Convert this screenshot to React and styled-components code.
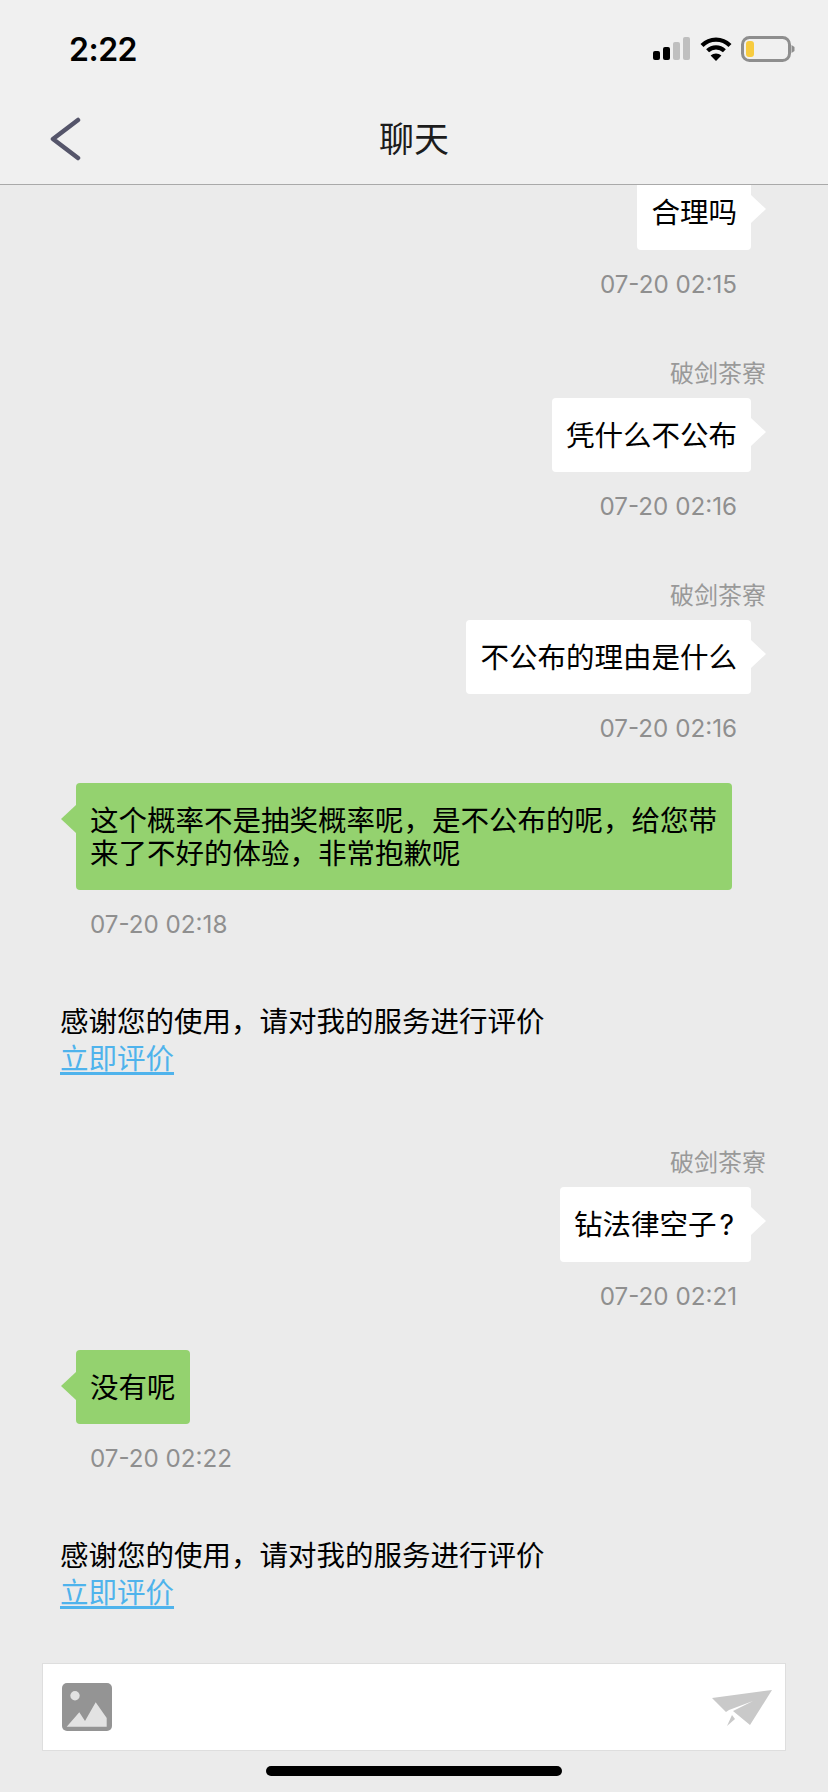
import React from "react";
import styled, { createGlobalStyle } from "styled-components";

const GlobalStyle = createGlobalStyle`
  html, body {
    margin: 0;
    padding: 0;
    background: #ebebeb;
  }
  * {
    box-sizing: border-box;
  }
`;

const FONT = `Inter, "Noto Sans CJK SC", sans-serif`;

const Page = styled.div`
  width: 828px;
  height: 1792px;
  display: flex;
  flex-direction: column;
  overflow: hidden;
  background: #ebebeb;
  font-family: ${FONT};
  color: #000;
`;

const Header = styled.header`
  height: 185px;
  flex: none;
  display: flex;
  flex-direction: column;
  background: #f0f0f0;
  border-bottom: 1px solid #a9a9a9;
`;

const StatusBar = styled.div`
  height: 98px;
  display: flex;
  align-items: center;
  justify-content: space-between;
  padding: 0 33px 0 69px;
`;

const Clock = styled.span`
  font-family: Inter, sans-serif;
  font-size: 32px;
  font-weight: 600;
  letter-spacing: -0.5px;
`;

const NavBar = styled.div`
  flex: 1;
  position: relative;
  display: flex;
  align-items: center;
  justify-content: center;
  padding-bottom: 4px;
`;

const BackIcon = styled.svg`
  position: absolute;
  left: 48px;
  top: 19px;
`;

const Title = styled.h1`
  margin: 0;
  font-size: 35px;
  line-height: 44px;
  font-weight: 400;
  color: #1c1c1c;
`;

const ChatList = styled.main`
  flex: 1;
  overflow: hidden;
`;

const Group = styled.section`
  display: flex;
  flex-direction: column;
  align-items: ${(p) => (p.$mine ? "flex-end" : "flex-start")};
  padding: ${(p) => (p.$mine ? "0 77px 0 0" : "0 0 0 76px")};
  margin-bottom: ${(p) => p.$gap}px;
  margin-top: ${(p) => p.$clip || 0}px;
`;

const Sender = styled.div`
  font-size: 24px;
  line-height: 24px;
  color: #999;
  margin: 0 -15px 12px 0;
`;

const Bubble = styled.div`
  position: relative;
  padding: 22px 14px 20px;
  font-size: 28.5px;
  line-height: 32.5px;
  border-radius: 4px;
  background: ${(p) => (p.$mine ? "#fff" : "#94d26f")};
  max-width: 656px;
  &::after {
    content: "";
    position: absolute;
    top: ${(p) => (p.$mine ? 20 : 22)}px;
    ${(p) => (p.$mine ? "right: -15px;" : "left: -15px;")}
    border-style: solid;
    border-width: 14px 15px 14px 0;
    border-color: transparent ${(p) => (p.$mine ? "#fff" : "#94d26f")} transparent transparent;
    ${(p) => p.$mine && "transform: scaleX(-1);"}
  }
`;

const QuestionMark = styled.span`
  padding: 0 3px;
`;

const Time = styled.div`
  font-size: 24.2px;
  line-height: 30px;
  margin-top: 20px;
  color: #8f8f8f;
  ${(p) => (p.$mine ? "padding-right: 14px;" : "padding-left: 14px;")}
`;

const Notice = styled.div`
  padding: 1px 0 0 60px;
  font-size: 28.5px;
  line-height: 37px;
  margin-bottom: ${(p) => p.$gap}px;
`;

const RateLink = styled.a`
  display: block;
  width: fit-content;
  color: #4fb3ec;
  text-decoration: underline;
  text-decoration-thickness: 3px;
  text-underline-offset: 3px;
`;

const Footer = styled.footer`
  flex: none;
  height: 129px;
  padding: 0 42px;
  display: flex;
  flex-direction: column;
  align-items: center;
`;

const InputBar = styled.div`
  width: 100%;
  height: 88px;
  background: #fff;
  border: 1px solid #dedede;
  display: flex;
  align-items: center;
  justify-content: space-between;
  padding: 0 13px 0 19px;
`;

const HomeBar = styled.div`
  width: 296px;
  height: 10px;
  margin-top: 15px;
  border-radius: 5px;
  background: #000;
`;

function SignalIcon() {
  return (
    <svg width="38" height="24" viewBox="0 0 38 24">
      <rect x="0" y="14" width="7" height="9" rx="2" fill="#000" />
      <rect x="10" y="10" width="7" height="13" rx="2" fill="#000" />
      <rect x="20" y="5" width="7" height="18" rx="2" fill="#bfbfbf" />
      <rect x="30" y="0" width="7" height="23" rx="2" fill="#bfbfbf" />
    </svg>
  );
}

function WifiIcon() {
  return (
    <svg width="32" height="24" viewBox="0 0 32 24" fill="none" stroke="#000" strokeWidth="4.2">
      <path d="M2 8.5C9.8 0.6 22.2 0.6 30 8.5" />
      <path d="M7.6 13.8C12.4 9.2 19.6 9.2 24.4 13.8" />
      <path d="M16 24L10.6 18.6C13.6 15.8 18.4 15.8 21.4 18.6Z" fill="#000" stroke="none" />
    </svg>
  );
}

function BatteryIcon() {
  return (
    <svg width="54" height="26" viewBox="0 0 54 26">
      <rect x="1.5" y="1.5" width="47" height="23" rx="7" fill="none" stroke="#8e8e8e" strokeWidth="3" />
      <rect x="5" y="5" width="8" height="16" rx="3" fill="#f7cb3f" />
      <path d="M50.5 9L53.5 11V15L50.5 17Z" fill="#8e8e8e" />
    </svg>
  );
}

const StatusIcons = styled.div`
  display: flex;
  align-items: center;
  gap: 9px;
`;

function ImageIcon() {
  return (
    <svg width="50" height="48" viewBox="0 0 50 48">
      <rect width="50" height="48" rx="5" fill="#949494" />
      <circle cx="13" cy="12.7" r="4.7" fill="#e2e2e2" />
      <path d="M4.7 43.7L17.3 29.3L23 38L33.7 19.3L44.7 35V43.7Z" fill="#e2e2e2" />
    </svg>
  );
}

function SendIcon() {
  return (
    <svg width="62" height="37" viewBox="0 0 62 37" fill="#c9c9c9">
      <path d="M2 9L62 1L40 36L23 22L43 12L19 21L16 23Z" />
      <path d="M22 26L25 30L17 37Z" />
    </svg>
  );
}

const RATE_TEXT = "感谢您的使用，请对我的服务进行评价";

export default function App() {
  return (
    <Page>
      <GlobalStyle />
      <Header>
        <StatusBar>
          <Clock>2:22</Clock>
          <StatusIcons>
            <SignalIcon />
            <WifiIcon />
            <BatteryIcon />
          </StatusIcons>
        </StatusBar>
        <NavBar>
          <BackIcon width="34" height="44" viewBox="0 0 34 44" fill="none" stroke="#55556a" strokeWidth="4.5" strokeLinecap="round" strokeLinejoin="round">
            <path d="M30 3L5 22L30 41" />
          </BackIcon>
          <Title>聊天</Title>
        </NavBar>
      </Header>
      <ChatList>
        <Group $mine $gap={62} $clip={-10}>
          <Bubble $mine>合理吗</Bubble>
          <Time $mine>07-20 02:15</Time>
        </Group>
        <Group $mine $gap={61.5}>
          <Sender>破剑茶寮</Sender>
          <Bubble $mine>凭什么不公布</Bubble>
          <Time $mine>07-20 02:16</Time>
        </Group>
        <Group $mine $gap={39}>
          <Sender>破剑茶寮</Sender>
          <Bubble $mine>不公布的理由是什么</Bubble>
          <Time $mine>07-20 02:16</Time>
        </Group>
        <Group $gap={62}>
          <Bubble>这个概率不是抽奖概率呢，是不公布的呢，给您带来了不好的体验，非常抱歉呢</Bubble>
          <Time>07-20 02:18</Time>
        </Group>
        <Notice $gap={74}>
          {RATE_TEXT}
          <RateLink>立即评价</RateLink>
        </Notice>
        <Group $mine $gap={38}>
          <Sender>破剑茶寮</Sender>
          <Bubble $mine>钻法律空子<QuestionMark>?</QuestionMark></Bubble>
          <Time $mine>07-20 02:21</Time>
        </Group>
        <Group $gap={62}>
          <Bubble>没有呢</Bubble>
          <Time>07-20 02:22</Time>
        </Group>
        <Notice $gap={0}>
          {RATE_TEXT}
          <RateLink>立即评价</RateLink>
        </Notice>
      </ChatList>
      <Footer>
        <InputBar>
          <ImageIcon />
          <SendIcon />
        </InputBar>
        <HomeBar />
      </Footer>
    </Page>
  );
}
